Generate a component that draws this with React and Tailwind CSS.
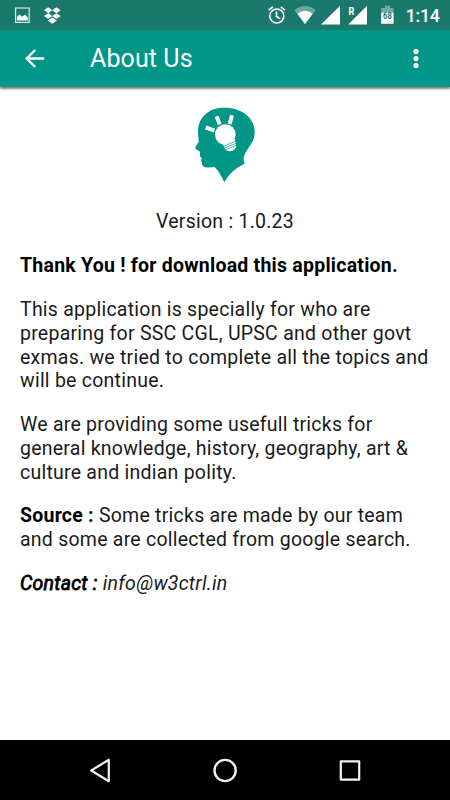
function StatusBar() {
  return (
    <div className="h-[30px] shrink-0 bg-[#1b786d]">
      <svg width="450" height="30" viewBox="0 0 450 30" className="block">
        <rect x="15.6" y="8" width="13.6" height="14.4" fill="none" stroke="#d5eae6" strokeWidth="1.2" />
        <path d="M17 20.5V17l2.5-2.5 2 2 1.5-.5 2-1.5 2.8 3V20.5z" fill="#fff" />
        <g fill="#fff">
          <path d="M48.2 7.3l4.1 3-4.1 2.9-4.2-2.9zM56.4 7.3l4.3 3-4.3 2.9-4.1-2.9zM48.2 13.2l4.1 2.9-4.1 3-4.2-3zM56.4 13.2l4.3 2.9-4.3 3-4.1-3zM52.3 17.6l4.6 2.9-4.6 3.2-4.6-3.2z" />
        </g>
        <g fill="none" stroke="#fff" strokeWidth="1.6">
          <circle cx="276.8" cy="16" r="7" />
          <path d="M276.5 11.5v5l3.6 2.4M268.7 10.2l4.1-3.4M284.9 10.2l-4.1-3.4" />
        </g>
        <path d="M294.5 10.2Q305 2 315.6 10.2L305 24z" fill="#fff" opacity=".35" />
        <path d="M297.4 13.8Q305 7.5 312.7 13.8L305 24z" fill="#fff" />
        <path d="M340 5.8V24.4H321z" fill="#fff" />
        <path d="M367 5.8V24.4H348.3z" fill="#fff" />
        <path d="M385 5.7h5V8h3.4v5H381.2V8h3.8z" fill="#fff" opacity=".38" />
        <path d="M381.2 12.6h12.4v11.2H381.2z" fill="#fff" />
        <text transform="translate(348.6 15.2) scale(.84 1)" fill="#fff" fontSize="11" fontWeight="700" fontFamily="Roboto, sans-serif">R</text>
        <text transform="translate(387.4 18.6) scale(.88 1)" fill="#1b786d" fontSize="8.6" fontWeight="700" textAnchor="middle" fontFamily="Roboto, sans-serif">68</text>
        <text x="405.8" y="22" fill="#fff" fontSize="17.8" fontWeight="500" textLength="34" fontFamily="Roboto, sans-serif">1:14</text>
      </svg>
    </div>
  );
}

function Toolbar() {
  return (
    <header className="relative flex h-[57px] shrink-0 items-center bg-[#009688] text-white shadow-[0_2px_2px_rgba(0,0,0,0.5)]">
      <svg width="20" height="20" viewBox="0 0 20 20" className="ml-[25px] shrink-0" fill="none" stroke="currentColor" strokeWidth="2.3">
        <path d="M19.2 9.5H1.8M10.2 1L1.7 9.5L10.2 18" />
      </svg>
      <h1 className="ml-[45px] grow text-[25px] leading-[30px] tracking-[0.1px]">About Us</h1>
      <svg width="6" height="22" viewBox="0 0 6 22" className="mr-[31.5px] shrink-0" fill="currentColor">
        <circle cx="3" cy="3.4" r="2.6" />
        <circle cx="3" cy="10.5" r="2.6" />
        <circle cx="3" cy="17.6" r="2.6" />
      </svg>
    </header>
  );
}

function HeadLogo() {
  return (
    <svg width="90" height="95" viewBox="0 0 270 285" className="mx-auto block">
      <path
        fill="#009688"
        d="M133 262C125 245 116 228 104 216Q88 218 75 217Q66 215 66 202L63 195L66 190L60 184V170Q52 166 47 162L46 157L56 141C57 133 53 120 54 106C56 66 88 37 132 38C187 37 222 70 224 106C227 147 196 159 191 190Q190 199 194 206C166 219 148 235 133 262Z"
      />
      <g fill="#fff">
        <circle cx="136" cy="119" r="31" />
        <path d="M124 138L133 157Q137 170 151 169Q166 168 169 154L166 138L155 120Z" />
      </g>
      <g fill="none" stroke="#fff" strokeWidth="12">
        <path d="M77 97L103 107M110 64L119 88M156 61L149 87" />
      </g>
      <path d="M132 153L166 139M133 159L168 145M137 164L169 151" stroke="#009688" strokeWidth="2" fill="none" />
    </svg>
  );
}

function NavBar() {
  return (
    <nav className="flex h-[60px] shrink-0 items-center justify-between bg-black pl-[87px] pr-[88px]">
      <svg width="25" height="25" viewBox="0 0 25 25" fill="none" stroke="#f2f2f2" strokeWidth="2.2" strokeLinejoin="round">
        <path d="M21.8 1.8V23.2L4.2 12.5z" />
      </svg>
      <svg width="25" height="25" viewBox="0 0 25 25" fill="none" stroke="#f2f2f2" strokeWidth="2.4">
        <circle cx="13.1" cy="12.5" r="10.6" />
      </svg>
      <svg width="25" height="25" viewBox="0 0 25 25" fill="none" stroke="#f2f2f2" strokeWidth="2.2" strokeLinejoin="round">
        <rect x="3.8" y="3.3" width="18.4" height="18.4" />
      </svg>
    </nav>
  );
}

export default function App() {
  return (
    <div className="flex h-[800px] w-[450px] flex-col overflow-hidden bg-white font-[Roboto,sans-serif]">
      <StatusBar />
      <Toolbar />
      <main className="grow pt-2">
        <HeadLogo />
        <div className="mt-[20.4px] flex flex-col gap-[20.2px] whitespace-nowrap px-5 text-[19.5px] leading-[23.7px] tracking-[0.24px] text-[#1a1a1a]">
          <p className="text-center">Version : 1.0.23</p>
          <p className="font-bold text-black">Thank You ! for download this application.</p>
          <p>
            This application is specially for who are<br />
            preparing for SSC CGL, UPSC and other govt<br />
            exmas. we tried to complete all the topics and<br />
            will be continue.
          </p>
          <p>
            We are providing some usefull tricks for<br />
            general knowledge, history, geography, art &amp;<br />
            culture and indian polity.
          </p>
          <p>
            <b className="text-black">Source :</b> Some tricks are made by our team<br />
            and some are collected from google search.
          </p>
          <p className="italic">
            <span className="text-black [-webkit-text-stroke:0.8px_black]">Contact :</span> info@w3ctrl.in
          </p>
        </div>
      </main>
      <NavBar />
    </div>
  );
}
